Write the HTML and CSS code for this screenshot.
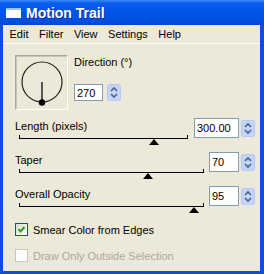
FILE: index.html
```html
<!DOCTYPE html>
<html lang="en">
<head>
    <meta charset="UTF-8">
    <title>Motion Trail</title>
    <link rel="stylesheet" href="styles.css">
</head>
<body>
    <div class="window">
        <div class="titlebar">
            <span class="app-icon"></span>
            <span class="title">Motion Trail</span>
        </div>
        <div class="client">
            <ul class="menubar">
                <li>Edit</li>
                <li>Filter</li>
                <li>View</li>
                <li>Settings</li>
                <li>Help</li>
            </ul>

            <div class="content">
                <!-- Direction dial -->
                <div class="direction">
                    <div class="dial">
                        <svg width="51" height="53" viewBox="0 0 51 53">
                            <circle cx="26" cy="26" r="20" fill="none" stroke="#222" stroke-width="1.2"/>
                            <line x1="26" y1="26" x2="26" y2="46" stroke="#555" stroke-width="2"/>
                            <circle cx="26" cy="46.5" r="3.2" fill="#000"/>
                        </svg>
                    </div>
                    <div class="direction-field">
                        <div class="label">Direction (°)</div>
                        <div class="field">
                            <input class="num small" type="text" value="270">
                            <span class="spin">
                                <svg width="14" height="17" viewBox="0 0 14 17">
                                    <rect x="0.5" y="0.5" width="13" height="16" rx="2" fill="#c5d4fb" stroke="#b4c8f4"/>
                                    <polyline points="4,7 7,4 10,7" fill="none" stroke="#4d6185" stroke-width="1.6"/>
                                    <polyline points="4,10 7,13 10,10" fill="none" stroke="#4d6185" stroke-width="1.6"/>
                                </svg>
                            </span>
                        </div>
                    </div>
                </div>

                <!-- Sliders -->
                <div class="slider-row">
                    <div class="slider-col">
                        <div class="label">Length (pixels)</div>
                        <div class="track"><span class="thumb" style="left: 80%"></span></div>
                    </div>
                    <div class="field">
                        <input class="num wide" type="text" value="300.00">
                        <span class="spin">
                            <svg width="14" height="17" viewBox="0 0 14 17">
                                <rect x="0.5" y="0.5" width="13" height="16" rx="2" fill="#c5d4fb" stroke="#b4c8f4"/>
                                <polyline points="4,7 7,4 10,7" fill="none" stroke="#4d6185" stroke-width="1.6"/>
                                <polyline points="4,10 7,13 10,10" fill="none" stroke="#4d6185" stroke-width="1.6"/>
                            </svg>
                        </span>
                    </div>
                </div>

                <div class="slider-row">
                    <div class="slider-col">
                        <div class="label">Taper</div>
                        <div class="track"><span class="thumb" style="left: 70%"></span></div>
                    </div>
                    <div class="field">
                        <input class="num" type="text" value="70">
                        <span class="spin">
                            <svg width="14" height="17" viewBox="0 0 14 17">
                                <rect x="0.5" y="0.5" width="13" height="16" rx="2" fill="#c5d4fb" stroke="#b4c8f4"/>
                                <polyline points="4,7 7,4 10,7" fill="none" stroke="#4d6185" stroke-width="1.6"/>
                                <polyline points="4,10 7,13 10,10" fill="none" stroke="#4d6185" stroke-width="1.6"/>
                            </svg>
                        </span>
                    </div>
                </div>

                <div class="slider-row">
                    <div class="slider-col">
                        <div class="label">Overall Opacity</div>
                        <div class="track"><span class="thumb" style="left: 95%"></span></div>
                    </div>
                    <div class="field">
                        <input class="num" type="text" value="95">
                        <span class="spin">
                            <svg width="14" height="17" viewBox="0 0 14 17">
                                <rect x="0.5" y="0.5" width="13" height="16" rx="2" fill="#c5d4fb" stroke="#b4c8f4"/>
                                <polyline points="4,7 7,4 10,7" fill="none" stroke="#4d6185" stroke-width="1.6"/>
                                <polyline points="4,10 7,13 10,10" fill="none" stroke="#4d6185" stroke-width="1.6"/>
                            </svg>
                        </span>
                    </div>
                </div>

                <!-- Options -->
                <div class="check">
                    <span class="box">
                        <svg width="11" height="11" viewBox="0 0 11 11">
                            <polyline points="2.5,5 4.5,7.5 8.5,3" fill="none" stroke="#21a121" stroke-width="2"/>
                        </svg>
                    </span>
                    Smear Color from Edges
                </div>
                <div class="check disabled">
                    <span class="box"></span>
                    Draw Only Outside Selection
                </div>
            </div>
        </div>
    </div>
</body>
</html>
```

FILE: styles.css
```css
/* Ventana estilo XP */
body {
    margin: 0;
    font-family: "Liberation Sans", Arial, sans-serif;
    font-size: 11px;
    color: #000;
}
.window {
    width: 264px;
    height: 274px;
    background: #0a4fdf;
    display: flex;
    flex-direction: column;
    overflow: hidden;
}
.titlebar {
    height: 25px;
    display: flex;
    align-items: center;
    gap: 5px;
    padding-left: 6px;
    background: linear-gradient(#3d8cf5 0%, #0a5cee 12%, #0055e6 50%, #004fdf 85%, #0046d2 100%);
}
.app-icon {
    width: 15px;
    height: 10px;
    background: #fff;
    border-top: 2px solid #9dc2ff;
    box-sizing: border-box;
}
.title {
    color: #fff;
    font-weight: bold;
    font-size: 14px;
    text-shadow: 1px 1px 0 #0b2c9c;
}
.client {
    flex: 1;
    margin: 0 4px 3px 3px;
    background: #ece9d8;
    overflow: hidden;
}
.menubar {
    list-style: none;
    margin: 0;
    padding: 0 0 0 1px;
    height: 18px;
    line-height: 18px;
    display: flex;
    border-bottom: 1px solid #fff;
}
.menubar li {
    padding: 0 5px 0 5.5px;
}
.content {
    padding: 11px 5px 0 12px;
}
.label {
    line-height: 13px;
}
.direction {
    display: flex;
    height: 55px;
}
.dial {
    width: 53px;
    height: 55px;
    box-sizing: border-box;
    border: 1px solid;
    border-color: #aca899 #fff #fff #aca899;
    box-shadow: inset 1px 1px 0 #c9c6b6;
}
.dial svg {
    display: block;
}
.direction-field {
    margin-left: 6px;
}
.direction-field .label {
    margin-top: 1px;
}
.direction-field .field {
    margin-top: 15px;
    gap: 4px;
}
.field {
    display: flex;
    align-items: center;
    gap: 2px;
}
.spin svg {
    display: block;
}
.num {
    box-sizing: border-box;
    width: 30px;
    height: 20px;
    margin: 0;
    padding: 0 2px;
    border: 1px solid #7f9db9;
    background: #fff;
    font-family: inherit;
    font-size: 11px;
    color: #000;
    outline: none;
}
.num.small {
    width: 29px;
    height: 17px;
}
.num.wide {
    width: 45px;
    margin-left: 1px;
}
.slider-row {
    display: flex;
    align-items: flex-start;
    gap: 5px;
    height: 34px;
}
.direction + .slider-row {
    margin-top: 8px;
}
.slider-col {
    flex: 1;
}
.slider-col .label {
    margin-top: 2px;
}
.track {
    position: relative;
    height: 3px;
    margin: 2px 0 0 4px;
    border: 1px solid #000;
    border-top: none;
}
.thumb {
    position: absolute;
    top: 100%;
    margin-top: 1px;
    width: 0;
    height: 0;
    transform: translateX(-50%);
    border-left: 5px solid transparent;
    border-right: 5px solid transparent;
    border-bottom: 6px solid #000;
}
.check {
    display: flex;
    align-items: center;
    gap: 5px;
    height: 13px;
    margin-top: 3px;
}
.check + .check {
    margin-top: 13px;
}
.box {
    width: 13px;
    height: 13px;
    box-sizing: border-box;
    border: 1px solid #1c5180;
    background: linear-gradient(135deg, #dcdbd5, #fff);
}
.box svg {
    display: block;
}
.check.disabled {
    color: #aca899;
}
.check.disabled .box {
    border-color: #cac8bb;
    background: #fff;
}
```
